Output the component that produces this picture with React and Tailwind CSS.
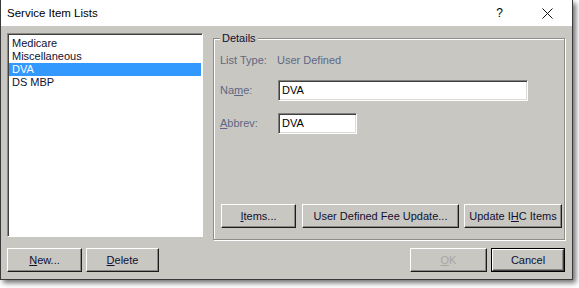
import React from "react";

const font = { fontFamily: '"Liberation Sans", Arial, sans-serif' };

function Btn({ children, w, className = "", def = false }) {
  if (def) {
    return (
      <div className={`h-[24px] border border-black ${w} ${className}`}>
        <div className="h-full w-full border border-t-white border-l-white border-r-[#404040] border-b-[#404040] shadow-[inset_-1px_-1px_0_#8a8884] flex items-center justify-center text-[11px] leading-[13px] text-[#101030]">
          {children}
        </div>
      </div>
    );
  }
  return (
    <div
      className={`h-[24px] border border-t-white border-l-white border-r-[#1c1c1c] border-b-[#1c1c1c] shadow-[inset_-1px_-1px_0_#8a8884] flex items-center justify-center text-[11px] leading-[13px] text-[#101030] ${w} ${className}`}
    >
      {children}
    </div>
  );
}

export default function App() {
  const items = ["Medicare", "Miscellaneous", "DVA", "DS MBP"];
  return (
    <div className="w-[579px] h-[288px] bg-white" style={font}>
      <div className="w-[573px] h-[280px] flex flex-col border-l border-r border-b border-[#3a3a3a] shadow-[3px_3px_5px_rgba(0,0,0,0.55)] bg-white">
        {/* title bar */}
        <div className="h-[26px] flex items-center bg-white shrink-0">
          <span className="ml-[6px] text-[11.5px] text-black leading-[14px]">Service Item Lists</span>
          <span className="ml-auto mr-[39px] text-[12px] text-black leading-[14px]">?</span>
          <svg width="11" height="11" viewBox="0 0 11 11" className="mr-[19px]">
            <path d="M0.5 0.5 L10.5 10.5 M10.5 0.5 L0.5 10.5" stroke="#111" strokeWidth="1" fill="none" />
          </svg>
        </div>
        {/* body */}
        <div className="flex-1 bg-[#c9c7c2] pl-[6px] pr-[7px] pt-[7px] flex flex-col">
          <div className="flex h-[204px]">
            {/* list box */}
            <div className="w-[196px] h-full bg-white border border-t-[#8a8884] border-l-[#8a8884] border-b-white border-r-white shadow-[inset_1px_1px_0_#404040] pt-[3px] pl-[1px] pr-[1px]">
              {items.map((it) => (
                <div
                  key={it}
                  className={`h-[13px] pl-[3px] text-[11px] leading-[13px] ${
                    it === "DVA" ? "bg-[#3399ff] text-white" : "text-[#101030]"
                  }`}
                >
                  {it}
                </div>
              ))}
            </div>
            {/* group box */}
            <div className="ml-[10px] mt-[5px] w-[352px] h-[202px] relative border border-[#8f8d88] shadow-[inset_1px_1px_0_#fff,1px_1px_0_#fff] flex flex-col pl-[6px]">
              <span className="absolute -top-[7px] left-[6px] px-[2px] bg-[#c9c7c2] text-[11px] leading-[13px] text-[#101030]">
                Details
              </span>
              <div className="mt-[15px] h-[13px] flex text-[11px] leading-[13px] text-[#5e6782]">
                <span className="w-[57px]">List Type:</span>
                <span>User Defined</span>
              </div>
              <div className="mt-[13px] h-[21px] flex items-center text-[11px] leading-[13px]">
                <span className="w-[58px] text-[#5e6782]">
                  Na<u className="underline-offset-[1px]">m</u>e:
                </span>
                <div className="w-[250px] h-[21px] bg-white border border-t-[#808080] border-l-[#808080] border-b-white border-r-white shadow-[inset_1px_1px_0_#404040,inset_-1px_-1px_0_#dcdad5] flex items-center pl-[3px] text-black">
                  DVA
                </div>
              </div>
              <div className="mt-[12px] h-[21px] flex items-center text-[11px] leading-[13px]">
                <span className="w-[58px] text-[#5e6782]">
                  <u className="underline-offset-[1px]">A</u>bbrev:
                </span>
                <div className="w-[79px] h-[21px] bg-white border border-t-[#808080] border-l-[#808080] border-b-white border-r-white shadow-[inset_1px_1px_0_#404040,inset_-1px_-1px_0_#dcdad5] flex items-center pl-[3px] text-black">
                  DVA
                </div>
              </div>
              <div className="flex-1" />
              <div className="mb-[11px] flex ml-[1px]">
                <Btn w="w-[75px]">
                  <span>
                    <u>I</u>tems...
                  </span>
                </Btn>
                <Btn w="w-[157px]" className="ml-[6px]">
                  User Defined Fee Update...
                </Btn>
                <Btn w="w-[98px]" className="ml-[5px]">
                  <span>
                    Update I<u>H</u>C Items
                  </span>
                </Btn>
              </div>
            </div>
          </div>
          {/* bottom buttons */}
          <div className="mt-[11px] flex">
            <Btn w="w-[75px]">
              <span>
                <u>N</u>ew...
              </span>
            </Btn>
            <Btn w="w-[73px]" className="ml-[4px]">
              <span>
                <u>D</u>elete
              </span>
            </Btn>
            <div className="flex-1" />
            <Btn w="w-[77px]">
              <span className="text-[#a8a6a2]">
                <u>O</u>K
              </span>
            </Btn>
            <Btn w="w-[74px]" className="ml-[4px]" def>
              Cancel
            </Btn>
          </div>
        </div>
      </div>
    </div>
  );
}
